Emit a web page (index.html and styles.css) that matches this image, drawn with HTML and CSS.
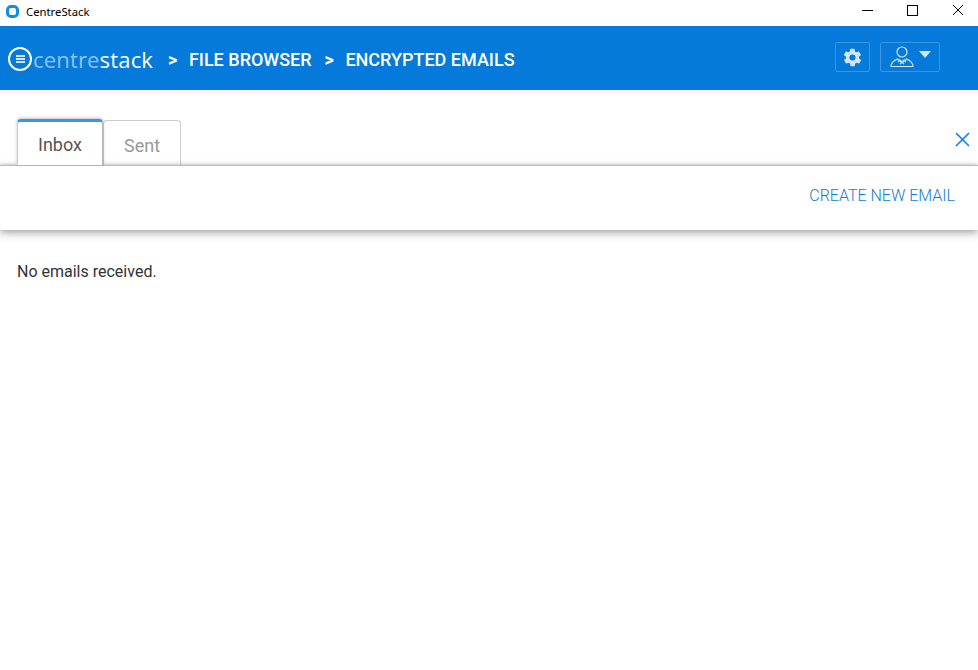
FILE: index.html
```html
<!DOCTYPE html>
<html lang="en">
<head>
    <meta charset="UTF-8">
    <title>CentreStack</title>
    <link rel="stylesheet" href="styles.css">
</head>
<body>
    <div class="titlebar">
        <div class="app-icon"></div>
        <div class="app-name">CentreStack</div>
        <div class="win-buttons">
            <svg class="win-btn" width="46" height="26" viewBox="0 0 46 26"><path d="M19 10.5h11" stroke="#000" fill="none"/></svg>
            <svg class="win-btn" width="46" height="26" viewBox="0 0 46 26"><rect x="18.5" y="5.5" width="10" height="10" stroke="#000" fill="none"/></svg>
            <svg class="win-btn" width="46" height="26" viewBox="0 0 46 26"><path d="M18 5l10 10M28 5l-10 10" stroke="#000" fill="none"/></svg>
        </div>
    </div>

    <div class="header">
        <div class="logo">
            <div class="logo-mark">
                <span></span><span></span><span></span>
            </div>
            <div class="logo-text"><span class="logo-light">centre</span>stack</div>
        </div>
        <div class="crumb-sep">&gt;</div>
        <div class="crumb">FILE BROWSER</div>
        <div class="crumb-sep">&gt;</div>
        <div class="crumb">ENCRYPTED EMAILS</div>
        <div class="header-tools">
            <div class="tool-btn gear-btn">
                <svg width="21" height="21" viewBox="0 0 24 24"><path fill="#cfe6fb" fill-rule="evenodd" d="M19.4 13c.1-.3.1-.7.1-1s0-.7-.1-1l2.1-1.6c.2-.2.2-.4.1-.6l-2-3.5c-.1-.2-.4-.3-.6-.2l-2.5 1c-.5-.4-1.1-.7-1.7-1l-.4-2.6c0-.3-.2-.5-.5-.5h-4c-.3 0-.5.2-.5.4l-.4 2.7c-.6.2-1.1.6-1.7 1l-2.5-1c-.2-.1-.5 0-.6.2l-2 3.5c-.1.2-.1.4.1.6L4.6 11c-.1.3-.1.7-.1 1s0 .7.1 1l-2.1 1.6c-.2.2-.2.4-.1.6l2 3.5c.1.2.4.3.6.2l2.5-1c.5.4 1.1.7 1.7 1l.4 2.6c0 .3.2.5.5.5h4c.3 0 .5-.2.5-.4l.4-2.7c.6-.2 1.1-.6 1.7-1l2.5 1c.2.1.5 0 .6-.2l2-3.5c.1-.2.1-.4-.1-.6L19.4 13zM12 15.500a3.500 3.500 0 1 1 0-7 3.500 3.500 0 0 1 0 7z"/></svg>
            </div>
            <div class="tool-btn user-btn">
                <svg width="24" height="22" viewBox="0 0 24 22" fill="none" stroke="#cfe6fb" stroke-width="1.2"><circle cx="12" cy="6" r="5"/><path d="M1 20.500c0-4 3-6 6.500-7.500l4.500 3.500 4.500-3.500c3.500 1.500 6.500 3.500 6.500 7.500z"/><path d="M8 16l2-2 4 4M16 16l-2-2-4 4"/></svg>
                <div class="caret"></div>
            </div>
        </div>
    </div>

    <div class="tabs-row">
        <div class="tab active">Inbox</div>
        <div class="tab">Sent</div>
        <svg class="close-icon" width="16" height="16" viewBox="0 0 16 16"><path d="M2 2l13 13M15 2L2 15" stroke="#1481e0" stroke-width="1.6" fill="none"/></svg>
    </div>

    <div class="action-bar">
        <div class="create-link">CREATE NEW EMAIL</div>
    </div>

    <div class="content">No emails received.</div>
</body>
</html>
```

FILE: styles.css
```css
html, body {
    margin: 0;
    padding: 0;
}

body {
    width: 978px;
    height: 670px;
    overflow: hidden;
    background: #fff;
    font-family: Roboto, Arial, sans-serif;
    color: #333;
}

.titlebar {
    height: 26px;
    display: flex;
    align-items: center;
    background: #fff;
}

.app-icon {
    width: 7px;
    height: 7px;
    margin-left: 6px;
    margin-top: -3px;
    background: #fff;
    border: 3px solid #0f8fdc;
    border-radius: 5px;
}

.app-name {
    margin-left: 7px;
    font-family: "Noto Sans", sans-serif;
    font-size: 11.3px;
    color: #000;
    margin-top: -3px;
}

.win-buttons {
    margin-left: auto;
    display: flex;
    margin-right: -3px;
}

.win-btn {
    display: block;
}

.header {
    height: 64px;
    display: flex;
    align-items: center;
    background: #067ada;
    color: #fff;
}

.logo {
    display: flex;
    align-items: center;
    margin-left: 8px;
    margin-right: 2px;
    padding-top: 1px;
}

.logo-mark {
    width: 20px;
    height: 20px;
    border: 2px solid #fff;
    border-radius: 50%;
    display: flex;
    flex-direction: column;
    align-items: center;
    justify-content: center;
    gap: 1px;
}

.logo-mark span {
    width: 9px;
    height: 2px;
    background: #cfe6fb;
}

.logo-text {
    font-family: "Open Sans", sans-serif;
    font-size: 22px;
    margin-left: 1px;
    letter-spacing: 0.17px;
    color: #fff;
}

.logo-light {
    color: #8fc3f0;
}

.crumb-sep {
    margin-left: 13px;
    font-size: 18px;
    font-weight: 700;
    padding-top: 2px;
}

.crumb {
    margin-left: 11.5px;
    font-size: 18px;
    font-weight: 500;
    padding-top: 2px;
}

.header-tools {
    margin-left: auto;
    margin-right: 38px;
    margin-bottom: 2px;
    display: flex;
    gap: 10px;
}

.tool-btn {
    height: 28px;
    display: flex;
    align-items: center;
    justify-content: center;
    border: 1px solid #3b95e2;
    border-radius: 2px;
}

.gear-btn {
    width: 33px;
}

.user-btn {
    width: 58px;
    gap: 5px;
}

.caret {
    width: 0;
    height: 0;
    border-left: 6px solid transparent;
    border-right: 6px solid transparent;
    border-top: 7px solid #cfe6fb;
    margin-top: -5px;
}

.tabs-row {
    height: 75px;
    display: flex;
    align-items: flex-end;
    padding-left: 17px;
    position: relative;
}

.tab {
    width: 76px;
    height: 44px;
    border: 1px solid #ccc;
    border-bottom: none;
    border-radius: 4px 4px 0 0;
    text-align: center;
    font-size: 18px;
    line-height: 49px;
    color: #999;
}

.tab.active {
    width: 84px;
    height: 43px;
    border: none;
    border-top: 3px solid #3697e6;
    border-left: 1px solid #ccc;
    border-right: 1px solid #bbb;
    box-shadow: 0 -1px 3px rgba(0, 0, 0, 0.25);
    line-height: 46px;
    color: #555;
    position: relative;
    z-index: 2;
    background: #fff;
}

.close-icon {
    position: absolute;
    right: 8px;
    top: 41px;
}

.action-bar {
    height: 58px;
    display: flex;
    align-items: center;
    justify-content: flex-end;
    padding-right: 23px;
    padding-bottom: 6px;
    border-top: 1px solid #bbb;
    background: #fff;
    box-shadow: 0 3px 8px rgba(0, 0, 0, 0.35), 0 -1px 3px rgba(0, 0, 0, 0.12);
    position: relative;
    z-index: 1;
}

.create-link {
    font-size: 16px;
    font-weight: 300;
    color: #0f7bdc;
}

.content {
    padding: 33px 17px;
    font-size: 16px;
    line-height: 18px;
    color: #333;
}
```
